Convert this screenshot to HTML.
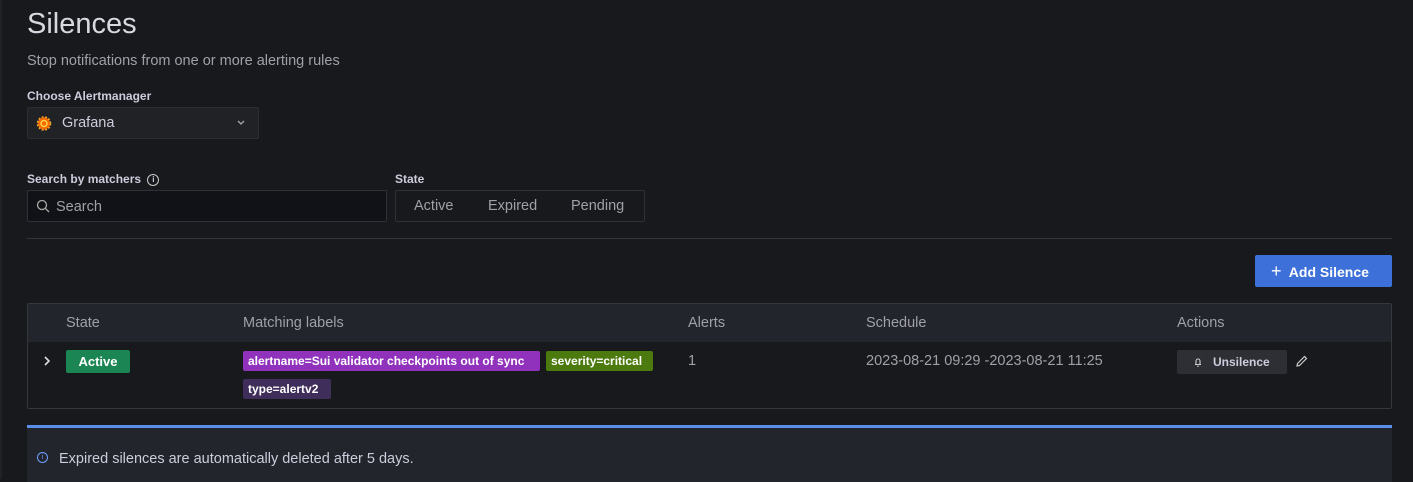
<!DOCTYPE html>
<html><head><style>
body{margin:0;width:1413px;height:479px;background:#18191d;font-family:"Liberation Sans",sans-serif;color:#ccccdc;position:relative;overflow:hidden}
.a{position:absolute;white-space:nowrap}
.lbl{font-size:12px;font-weight:bold;color:#ccccdc}
.tag{position:absolute;white-space:nowrap;height:20px;line-height:20px;font-size:12px;font-weight:bold;color:#fff;padding:0 5px;border-radius:2px}
</style></head><body>
<div class="a" style="left:0;top:0;width:2px;height:479px;background:#202226"></div>
<div class="a" style="left:27px;top:8px;font-size:29px;color:#d8d9e0">Silences</div>
<div class="a" style="left:27px;top:53px;font-size:14.5px;color:#9fa0a8">Stop notifications from one or more alerting rules</div>
<div class="a lbl" style="left:27px;top:89px">Choose Alertmanager</div>
<div class="a" style="left:27px;top:107px;width:230px;height:30px;background:#202226;border:1px solid #2b2d33;border-radius:2px"></div>
<svg class="a" style="left:36px;top:115px" width="16" height="16" viewBox="0 0 16 16"><circle cx="8" cy="8.5" r="6" fill="#f46800"/><circle cx="8" cy="8.5" r="6.5" fill="none" stroke="#f9a825" stroke-width="1.5" stroke-dasharray="2 1.5"/><circle cx="8" cy="8.5" r="3" fill="none" stroke="#fbd24a" stroke-width="1.5"/></svg>
<div class="a" style="left:62px;top:115px;font-size:14.5px;color:#ccccdc">Grafana</div>
<svg class="a" style="left:236px;top:119px" width="10" height="8" viewBox="0 0 10 8"><path d="M2 2l3 3 3-3" fill="none" stroke="#aaa" stroke-width="1.3"/></svg>
<div class="a lbl" style="left:27px;top:172px">Search by matchers <span style="display:inline-block;width:10px;height:10px;border:1px solid #ccc;border-radius:50%;font-size:8px;text-align:center;line-height:10px;vertical-align:middle;margin-left:3px">i</span></div>
<div class="a" style="left:27px;top:190px;width:358px;height:30px;background:#111217;border:1px solid #2f3138;border-radius:2px"></div>
<svg class="a" style="left:36px;top:199px" width="14" height="14" viewBox="0 0 14 14"><circle cx="6" cy="6" r="4.5" fill="none" stroke="#aaa" stroke-width="1.3"/><path d="M9.3 9.3L13 13" stroke="#aaa" stroke-width="1.3"/></svg>
<div class="a" style="left:56px;top:199px;font-size:14.5px;color:#9fa0a8">Search</div>
<div class="a lbl" style="left:395px;top:172px">State</div>
<div class="a" style="left:395px;top:190px;width:248px;height:30px;border:1px solid #2f3138;border-radius:2px;font-size:14.5px;color:#9fa0a8">
<span class="a" style="left:18px;top:7px">Active</span><span class="a" style="left:92px;top:7px">Expired</span><span class="a" style="left:175px;top:7px">Pending</span></div>
<div class="a" style="left:27px;top:238px;width:1365px;height:1px;background:#34363c"></div>
<div class="a" style="left:1255px;top:255px;width:137px;height:32px;background:#3d71d9;border-radius:2px;color:#fff;font-size:14px;font-weight:bold;line-height:32px"><span style="margin-left:16px;font-weight:normal;font-size:18px">+</span>&nbsp; Add Silence</div>
<div class="a" style="left:27px;top:303px;width:1363px;height:104px;border:1px solid #35373d;border-radius:2px"></div>
<div class="a" style="left:28px;top:304px;width:1363px;height:38px;background:#22252b"></div>
<div class="a" style="font-size:14.5px;color:#9fa0a8;top:315px;left:0;width:1413px">
<span class="a" style="left:66px">State</span><span class="a" style="left:243px">Matching labels</span><span class="a" style="left:688px">Alerts</span><span class="a" style="left:866px">Schedule</span><span class="a" style="left:1177px">Actions</span></div>
<svg class="a" style="left:42px;top:355px" width="10" height="12" viewBox="0 0 10 12"><path d="M3 2l4 4-4 4" fill="none" stroke="#ddd" stroke-width="1.6"/></svg>
<div class="a" style="left:66px;top:350px;width:64px;height:23px;background:#1b8553;border-radius:2px;color:#fff;font-size:13px;font-weight:bold;text-align:center;line-height:23px">Active</div>
<div class="tag" style="left:243px;top:351px;background:#9032bb;width:287px">alertname=Sui validator checkpoints out of sync</div>
<div class="tag" style="left:546px;top:351px;background:#4c7a0e;width:97px">severity=critical</div>
<div class="tag" style="left:243px;top:379px;background:#3f2d5a;width:78px">type=alertv2</div>
<div class="a" style="left:688px;top:353px;font-size:14.5px;color:#9fa0a8">1</div>
<div class="a" style="left:866px;top:353px;font-size:14.5px;color:#9fa0a8">2023-08-21 09:29 -2023-08-21 11:25</div>
<div class="a" style="left:1177px;top:350px;width:110px;height:24px;background:#2d2f34;border-radius:2px"></div>
<svg class="a" style="left:1193px;top:356px" width="10" height="12" viewBox="0 0 10 12"><path d="M2 8.5h6M3 8.5V5a2 2 0 0 1 4 0v3.5M4.2 10.2h1.6" fill="none" stroke="#ccc" stroke-width="1.1"/></svg>
<div class="a" style="left:1213px;top:355px;font-size:12px;font-weight:bold;color:#ccccdc">Unsilence</div>
<svg class="a" style="left:1295px;top:355px" width="13" height="13" viewBox="0 0 13 13"><path d="M2 11l0.5-2.5 7-7 2 2-7 7z" fill="none" stroke="#ccc" stroke-width="1.2"/></svg>
<div class="a" style="left:27px;top:425px;width:1365px;height:54px;background:#22252b;border-top:3px solid #5b8ee8"></div>
<div class="a" style="left:37px;top:452px;width:9px;height:9px;border:1.3px solid #6e9fff;border-radius:50%;font-size:7px;color:#6e9fff;text-align:center;line-height:9px">i</div>
<div class="a" style="left:59px;top:451px;font-size:14.5px;color:#ccccdc">Expired silences are automatically deleted after 5 days.</div>
</body></html>
